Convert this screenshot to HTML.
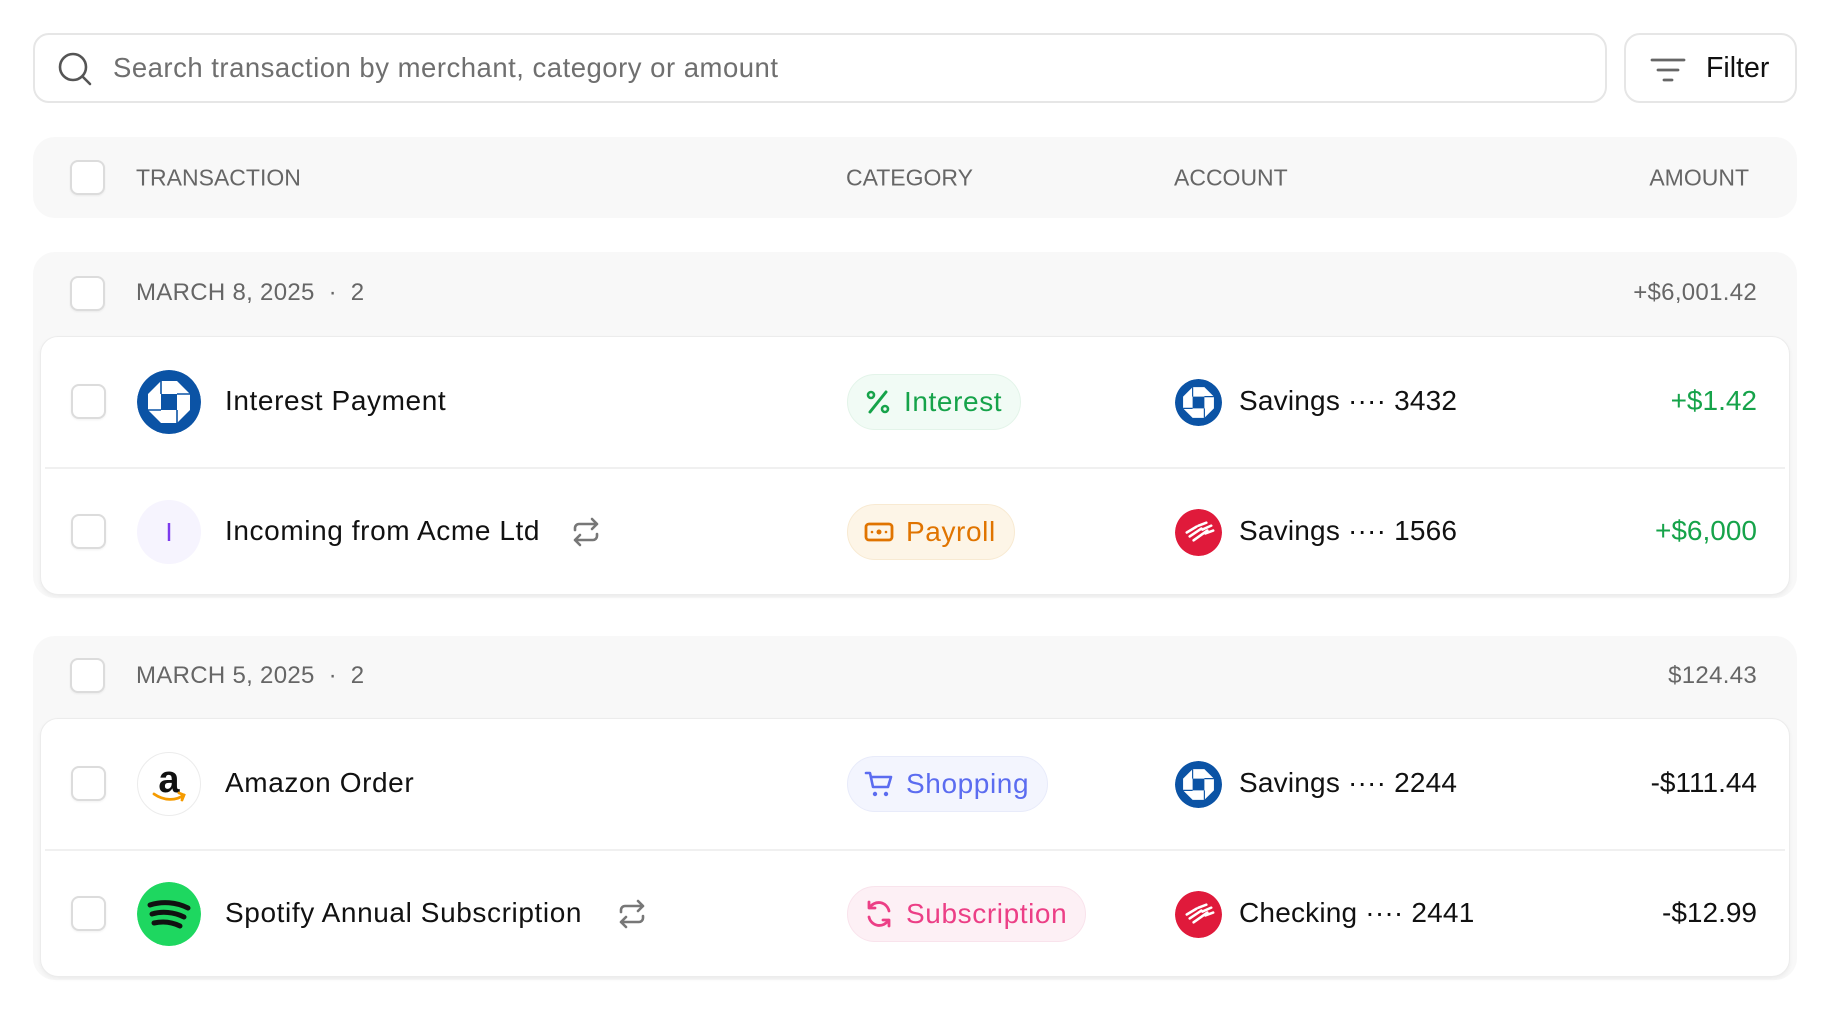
<!DOCTYPE html>
<html><head><meta charset="utf-8"><style>
*{box-sizing:border-box;margin:0;padding:0}
body{width:1830px;height:1016px;background:#fff;font-family:"Liberation Sans",sans-serif;position:relative;overflow:hidden;color:#111}
.abs{position:absolute}
.search{left:33px;top:33px;width:1574px;height:70px;border:2px solid #e6e6e6;border-radius:16px}
.search span{position:absolute;left:78px;top:17px;font-size:27.5px;color:#6f6f6f;letter-spacing:0.5px}
.filter{left:1624px;top:33px;width:173px;height:70px;border:2px solid #e6e6e6;border-radius:16px}
.filter span{position:absolute;left:80px;top:17px;font-size:28.5px;color:#111}
.bar{left:33px;width:1764px;background:#f8f8f8;border-radius:22px}
.cb{position:absolute;width:35px;height:35px;border:2px solid #dcdcdc;border-radius:8px;background:#fff;box-shadow:0 1px 2px rgba(0,0,0,.06)}
.hd{position:absolute;font-size:23px;color:#666;top:50%;transform:translateY(-50%)}
.gh{font-size:24px;letter-spacing:0.3px}
.card{left:40px;width:1750px;background:#fff;border:1.5px solid #ececec;border-radius:18px;box-shadow:0 2px 4px rgba(0,0,0,.05)}
.row{position:absolute;left:0;right:0;height:130px}
.row .cb{left:30px;top:47px}
.logo{position:absolute;left:96px;top:33px;width:64px;height:64px;border-radius:50%}
.name{position:absolute;left:184px;top:48px;font-size:28px;color:#111;letter-spacing:0.6px}
.pill{position:absolute;left:806px;top:37px;height:56px;border-radius:28px;display:flex;align-items:center;padding:0 18px 0 16px;font-size:28px;gap:12px;border:1.5px solid;letter-spacing:0.6px}
.acc{position:absolute;left:1134px;top:42px;width:47px;height:47px;border-radius:50%}
.acct{position:absolute;left:1198px;top:48px;font-size:28px;color:#111;letter-spacing:0.2px}
.amt{position:absolute;right:32px;top:48px;font-size:28px}
.div{position:absolute;left:4px;right:4px;top:130px;height:2px;background:#f0f0f0}
</style></head><body>

<svg width="0" height="0" style="position:absolute"><defs>
<symbol id="chase" viewBox="0 0 64 64"><circle cx="32" cy="32" r="32" fill="#0b53a5"/><path d="M24 11h16l13 13v16L40 53H24L11 40V24z" fill="#fff"/><rect x="24" y="24" width="16" height="16" fill="#0b53a5"/><path d="M24 24V11M40 24h13M40 40v13M24 40H11" stroke="#0b53a5" stroke-width="1.6" fill="none"/></symbol>
<symbol id="bofa" viewBox="0 0 48 48"><circle cx="24" cy="24" r="24" fill="#e01a3b"/><path d="M12 24l10-6M15 28l12-8M19 32l14-10M24 17l8-3M28 21l9-4M31 25l8-3" stroke="#fff" stroke-width="2.6" stroke-linecap="round"/></symbol>
</defs></svg>

<div class="abs search">
<svg class="abs" style="left:22px;top:16px" width="36" height="36" viewBox="0 0 36 36"><circle cx="16" cy="16" r="13" fill="none" stroke="#555" stroke-width="2.6"/><path d="M25.5 25.5L33 33" stroke="#555" stroke-width="2.6" stroke-linecap="round"/></svg>
<span>Search transaction by merchant, category or amount</span></div>
<div class="abs filter">
<svg class="abs" style="left:24px;top:22px" width="36" height="26" viewBox="0 0 36 26"><path d="M2 3h32M8 13h20M14 23h8" stroke="#666" stroke-width="2.8" stroke-linecap="round"/></svg>
<span>Filter</span></div>

<div class="abs bar" style="top:137px;height:81px">
<div class="cb" style="left:37px;top:23px"></div>
<div class="hd" style="left:103px">TRANSACTION</div>
<div class="hd" style="left:813px">CATEGORY</div>
<div class="hd" style="left:1141px">ACCOUNT</div>
<div class="hd" style="right:48px">AMOUNT</div>
</div>

<!-- group 1 -->
<div class="abs bar" style="top:252px;height:346px">
<div class="cb" style="left:37px;top:24px"></div>
<div class="hd gh" style="left:103px;top:41px">MARCH 8, 2025 &nbsp;·&nbsp; 2</div>
<div class="hd gh" style="right:40px;top:41px">+$6,001.42</div>
</div>
<div class="abs card" style="top:336px;height:259px">
<div class="row" style="top:0">
<div class="cb"></div>
<svg class="logo"><use href="#chase"/></svg>
<div class="name">Interest Payment</div>
<div class="pill" style="background:#f1fbf5;border-color:#e3f4e9;color:#16a34a">
<svg width="28" height="28" viewBox="0 0 28 28"><path d="M22 4L6 24" stroke="#16a34a" stroke-width="3" stroke-linecap="round"/><circle cx="7" cy="7" r="3" fill="none" stroke="#16a34a" stroke-width="2.6"/><circle cx="21" cy="21" r="3" fill="none" stroke="#16a34a" stroke-width="2.6"/></svg>Interest</div>
<svg class="acc"><use href="#chase"/></svg>
<div class="acct">Savings ···· 3432</div>
<div class="amt" style="color:#16a34a">+$1.42</div>
</div>
<div class="div"></div>
<div class="row" style="top:130px">
<div class="cb"></div>
<div class="logo" style="background:#f6f4fe;color:#7c3aed;font-size:26px;text-align:center;line-height:64px">I</div>
<div class="name">Incoming from Acme Ltd</div>
<svg class="abs" style="left:530px;top:50px" width="30" height="30" viewBox="0 0 30 30"><path d="M4 13v-2a4 4 0 014-4h18M21 2l5 5-5 5M26 17v2a4 4 0 01-4 4H4M9 28l-5-5 5-5" fill="none" stroke="#777" stroke-width="2.6" stroke-linecap="round" stroke-linejoin="round"/></svg>
<div class="pill" style="background:#fdf5e7;border-color:#f8ead2;color:#e07400">
<svg width="30" height="24" viewBox="0 0 30 24"><rect x="2" y="4" width="26" height="16" rx="3" fill="none" stroke="#e07400" stroke-width="2.8"/><circle cx="15" cy="12" r="2.5" fill="#e07400"/><circle cx="8" cy="12" r="1.3" fill="#e07400"/><circle cx="22" cy="12" r="1.3" fill="#e07400"/></svg>Payroll</div>
<svg class="acc"><use href="#bofa"/></svg>
<div class="acct">Savings ···· 1566</div>
<div class="amt" style="color:#16a34a">+$6,000</div>
</div>
</div>

<!-- group 2 -->
<div class="abs bar" style="top:636px;height:344px">
<div class="cb" style="left:37px;top:22px"></div>
<div class="hd gh" style="left:103px;top:40px">MARCH 5, 2025 &nbsp;·&nbsp; 2</div>
<div class="hd gh" style="right:40px;top:40px">$124.43</div>
</div>
<div class="abs card" style="top:718px;height:259px">
<div class="row" style="top:0">
<div class="cb"></div>
<div class="logo" style="background:#fff;border:1.5px solid #ececec"><div class="abs" style="left:0;right:0;top:6px;text-align:center;font-size:38px;font-weight:bold;color:#111">a</div>
<svg class="abs" style="left:14px;top:38px" width="36" height="14" viewBox="0 0 36 14"><path d="M2 3c10 7 22 7 30 1M27 2l5 2-2 5" fill="none" stroke="#f59b00" stroke-width="2.8" stroke-linecap="round"/></svg></div>
<div class="name">Amazon Order</div>
<div class="pill" style="background:#f3f5fe;border-color:#e8ebfa;color:#5b6cf0">
<svg width="30" height="30" viewBox="0 0 30 30"><path d="M2 4h4l3 14h15l3-10H8" fill="none" stroke="#5b6cf0" stroke-width="2.6" stroke-linecap="round" stroke-linejoin="round"/><circle cx="11" cy="25" r="2.2" fill="#5b6cf0"/><circle cx="22" cy="25" r="2.2" fill="#5b6cf0"/></svg>Shopping</div>
<svg class="acc"><use href="#chase"/></svg>
<div class="acct">Savings ···· 2244</div>
<div class="amt" style="color:#111">-$111.44</div>
</div>
<div class="div"></div>
<div class="row" style="top:130px">
<div class="cb"></div>
<svg class="logo" viewBox="0 0 64 64"><circle cx="32" cy="32" r="32" fill="#1ed760"/><path d="M13 23c12-4 26-3 38 3M15 32c10-3 22-2 32 3M17 41c9-2 18-1 26 3" fill="none" stroke="#111" stroke-width="5" stroke-linecap="round"/></svg>
<div class="name">Spotify Annual Subscription</div>
<svg class="abs" style="left:576px;top:50px" width="30" height="30" viewBox="0 0 30 30"><path d="M4 13v-2a4 4 0 014-4h18M21 2l5 5-5 5M26 17v2a4 4 0 01-4 4H4M9 28l-5-5 5-5" fill="none" stroke="#777" stroke-width="2.6" stroke-linecap="round" stroke-linejoin="round"/></svg>
<div class="pill" style="background:#fdf0f5;border-color:#f9e3ec;color:#ec3f86">
<svg width="30" height="30" viewBox="0 0 30 30"><path d="M25 12A10.5 10.5 0 005.5 9M5 18a10.5 10.5 0 0019.5 3M5 3v6h6M25 27v-6h-6" fill="none" stroke="#ec3f86" stroke-width="2.8" stroke-linecap="round" stroke-linejoin="round"/></svg>Subscription</div>
<svg class="acc"><use href="#bofa"/></svg>
<div class="acct">Checking ···· 2441</div>
<div class="amt" style="color:#111">-$12.99</div>
</div>
</div>
</body></html>
